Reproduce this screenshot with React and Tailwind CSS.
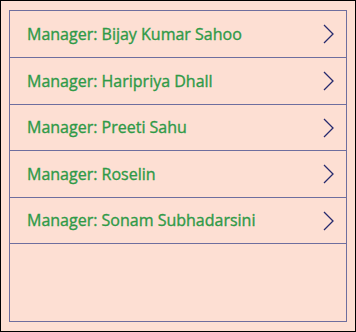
const managers = [
  { name: 'Bijay Kumar Sahoo', h: 'h-[46px]' },
  { name: 'Haripriya Dhall', h: 'h-[46px]' },
  { name: 'Preeti Sahu', h: 'h-[45px]' },
  { name: 'Roselin', h: 'h-[46px]' },
  { name: 'Sonam Subhadarsini', h: 'h-[45px]' },
];

export default function App() {
  return (
    <div className="w-[356px] h-[332px] border border-black bg-[#fddfd3] pt-[9px] px-[8px]" style={{ fontFamily: '"Open Sans", sans-serif' }}>
      <div className="h-[312px] border border-[#6e6e9e]">
        {managers.map(m => (
          <div key={m.name} className={`flex items-center justify-between pl-[17px] pr-[12px] border-b border-[#6e6e9e] box-content ${m.h}`}>
            <span className="text-[16px] leading-[22px] -mt-[1px] text-[#2f9a47] [-webkit-text-stroke:0.35px_#2f9a47]">Manager: {m.name}</span>
            <svg width="11" height="20" viewBox="0 0 11 20" fill="none">
              <path d="M1 1 L10 10 L1 19" stroke="#262a6e" strokeWidth="1.3" />
            </svg>
          </div>
        ))}
      </div>
    </div>
  );
}
